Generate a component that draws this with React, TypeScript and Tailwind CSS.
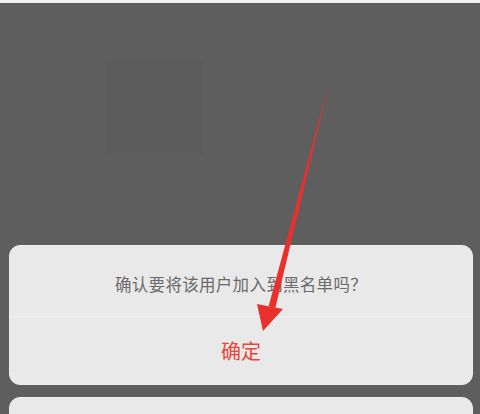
export default function App() {
  return (
    <div
      className="relative w-[480px] h-[414px] overflow-hidden bg-[#5e5e5e]"
      style={{ fontFamily: '"Noto Sans CJK SC", "Noto Sans", sans-serif' }}
    >
      {/* top edge */}
      <div className="h-[3px] bg-[#f0f0f0]" />

      {/* faint background card */}
      <div className="absolute left-[106px] top-[60px] w-[97px] h-[95px] bg-[#5c5c5c]" />

      {/* action sheet */}
      <div className="flex flex-col gap-[12px] pl-[9px] pr-[7px] pt-[242px]">
        <div className="rounded-[11px] bg-[#e9e9e9] border border-[#eeeeee]">
          <div className="h-[70px] flex items-center justify-center pt-[6px] text-[16.5px] tracking-[0.3px] text-[#6a6a6a]">
            确认要将该用户加入到黑名单吗？
          </div>
          <div className="h-[68px] flex items-center justify-center border-t border-[#f2f2f2] text-[20px] text-[#e8453c]">
            确定
          </div>
        </div>
        <div className="h-[60px] rounded-[11px] bg-[#e9e9e9] border border-[#eeeeee]" />
      </div>

      {/* annotation arrow */}
      <svg className="absolute inset-0" width="480" height="414" viewBox="0 0 480 414">
        <polygon points="328.5,85 275.4,307.8 268.6,306.2" fill="#e8302c" />
        <polygon points="257,304 283,309 263,331" fill="#e8302c" />
      </svg>
    </div>
  )
}
